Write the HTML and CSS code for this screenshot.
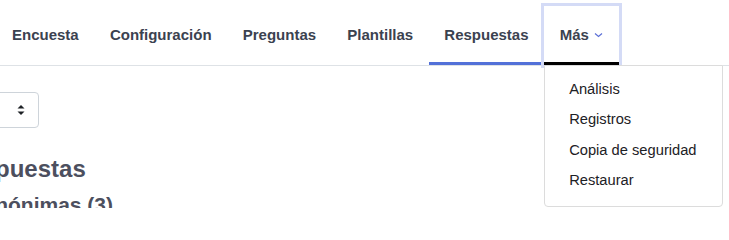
FILE: index.html
```html
<!DOCTYPE html>
<html lang="es">
<head>
<meta charset="utf-8">
<title>Respuestas</title>
<link rel="stylesheet" href="styles.css">
</head>
<body>
<nav class="tabs">
  <a class="tab">Encuesta</a>
  <a class="tab">Configuración</a>
  <a class="tab">Preguntas</a>
  <a class="tab">Plantillas</a>
  <a class="tab active">Respuestas</a>
  <div class="tab more">
    <span>Más</span>
    <svg class="chev" width="9" height="6" viewBox="0 0 9 6"><polyline points="1,1.5 4.5,4.5 8,1.5" fill="none" stroke="#5b6fd6" stroke-width="1.2"/></svg>
    <div class="menu">
      <a class="item">Análisis</a>
      <a class="item">Registros</a>
      <a class="item">Copia de seguridad</a>
      <a class="item">Restaurar</a>
    </div>
  </div>
</nav>
<main class="content">
  <div class="select">
    <svg class="sort" width="8" height="10" viewBox="0 0 8 10"><polygon points="4,0 7.5,3.6 0.5,3.6" fill="#1d2125"/><polygon points="4,10 7.5,6.4 0.5,6.4" fill="#1d2125"/></svg>
  </div>
  <h2 class="title">Respuestas</h2>
  <h3 class="subtitle">Anónimas (3)</h3>
</main>
</body>
</html>
```
FILE: styles.css
```css
html, body {
  margin: 0;
  padding: 0;
  width: 729px;
  height: 208px;
  overflow: hidden;
  background: #ffffff;
  font-family: "Liberation Sans", Arial, sans-serif;
}

.tabs {
  display: flex;
  margin-left: -3.6px;
  padding-top: 6px;
  border-bottom: 1px solid #dee2e6;
}

.tab {
  position: relative;
  display: flex;
  align-items: center;
  height: 56px;
  padding: 0 15.6px;
  border-bottom: 3px solid transparent;
  font-size: 15px;
  font-weight: bold;
  color: #3b4250;
  text-decoration: none;
}

.tab.active {
  border-bottom-color: #5270d8;
}

.tab.more {
  border-bottom-color: #000000;
  box-shadow: 0 0 0 3px #d4dbf6;
}

.chev {
  margin-left: 5px;
  margin-top: 1px;
}

.menu {
  position: absolute;
  top: calc(100% + 3px);
  left: 0;
  width: 177px;
  padding: 8px 0 11px;
  background: #ffffff;
  border: 1px solid #dcdcdc;
  border-radius: 0 0 4px 4px;
  display: flex;
  flex-direction: column;
  z-index: 2;
}

.item {
  display: block;
  padding: 0 24px;
  line-height: 30.3px;
  font-size: 14.7px;
  font-weight: normal;
  color: #1d2125;
  white-space: nowrap;
}

.content {
  padding-top: 26px;
}

.select {
  display: flex;
  justify-content: flex-end;
  align-items: center;
  box-sizing: border-box;
  width: 101px;
  height: 36px;
  margin-left: -62px;
  padding-right: 13px;
  border: 1px solid #ced4da;
  border-radius: 4px;
}

.title {
  margin: 27px 0 0 -49px;
  font-size: 24px;
  line-height: 28.8px;
  font-weight: bold;
  color: #4c4f5e;
}

.subtitle {
  margin: 8px 0 0 -20px;
  font-size: 21px;
  line-height: 25px;
  font-weight: bold;
  color: #4c4f5e;
}
```
